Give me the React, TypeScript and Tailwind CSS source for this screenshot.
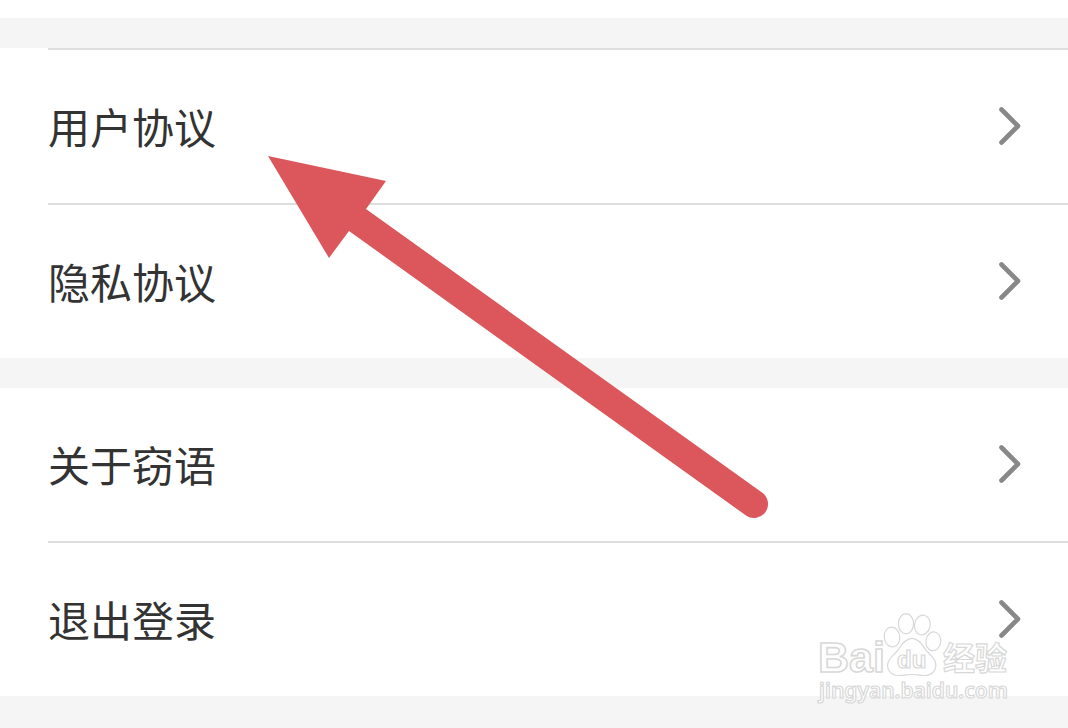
import React from 'react';

interface Group {
  id: string;
  topLine: boolean;
  items: string[];
}

const groups: Group[] = [
  { id: 'agreements', topLine: true, items: ['用户协议', '隐私协议'] },
  { id: 'account', topLine: false, items: ['关于窃语', '退出登录'] },
];

const Chevron: React.FC = () => (
  <svg width="24" height="40" viewBox="0 0 24 40" fill="none" aria-hidden="true">
    <path d="M3.500 3.500L20 20L3.500 36.500" stroke="#888888" strokeWidth="4.6" strokeLinecap="round" strokeLinejoin="round" />
  </svg>
);

const SettingsRow: React.FC<{ label: string; line: boolean }> = ({ label, line }) => (
  <li className={`ml-12 ${line ? 'border-t-2 border-[#dedede]' : ''}`}>
    <button type="button" className="flex w-full items-center justify-between pt-[46px] pr-[46px] pb-[47px] text-left">
      <span className="text-[42px] leading-[60px] text-[#333333]">{label}</span>
      <Chevron />
    </button>
  </li>
);

const PointerArrow: React.FC = () => (
  <svg
    className="pointer-events-none absolute top-[156px] left-[268px]"
    width="500"
    height="363"
    viewBox="0 0 500 363"
    aria-hidden="true"
  >
    <path d="M0 0L118 25L98 53L494 336.5A14 14 0 0 1 478 359.5L81 75L61 102Z" fill="#db575c" />
  </svg>
);

const Watermark: React.FC = () => (
  <svg
    className="pointer-events-none absolute right-14 bottom-5 overflow-visible"
    width="196"
    height="98"
    viewBox="0 0 196 98"
    fill="#ffffff"
    stroke="#d8d8d8"
    strokeWidth="1.2"
    role="img"
    aria-label="Baidu 经验"
  >
    {/* paw */}
    <ellipse cx="76" cy="27" rx="7.8" ry="10" transform="rotate(-8 76 27)" />
    <ellipse cx="90" cy="13.7" rx="7.6" ry="10" />
    <ellipse cx="106.3" cy="15" rx="7.8" ry="10" transform="rotate(12 106.3 15)" />
    <ellipse cx="117.3" cy="31.3" rx="7.4" ry="9.4" transform="rotate(8 117.3 31.3)" />
    <path d="M96 28.3C101.500 28.3 105.500 33 109.500 39.300C112 43 116 46 118.500 50C122 57 118 65.500 109 65.500C104 65.500 100 64.500 96 64.500C92 64.500 88 65.500 83 65.500C73 65.500 70 57.500 72.500 51.500C74.500 46.500 79 44 82.500 39.300C86.500 33 90.500 28.3 96 28.3Z" />

    {/* lettering */}
    <g className="font-['Liberation_Sans'] font-bold">
      <text x="2" y="62" fontSize="43" strokeWidth="1.6">Bai</text>
      <text x="81" y="58" fontSize="24">du</text>
    </g>
    <text x="127" y="60" fontSize="32" className="font-['Noto_Sans_CJK_SC'] font-bold">经验</text>
    <text x="3" y="88" fontSize="21" className="font-['Noto_Sans'] font-semibold">jingyan.baidu.com</text>
  </svg>
);

const App: React.FC = () => {
  return (
    <div className="relative min-h-screen overflow-hidden bg-[#f5f5f5] font-['Noto_Sans_CJK_SC',sans-serif]">
      <div className="h-[18px] bg-white"></div>

      <main>
        {groups.map((group) => (
          <ul key={group.id} className="mt-[30px] bg-white">
            {group.items.map((item, idx) => (
              <SettingsRow key={item} label={item} line={group.topLine || idx > 0} />
            ))}
          </ul>
        ))}
      </main>

      <PointerArrow />
      <Watermark />
    </div>
  );
};

export default App;
